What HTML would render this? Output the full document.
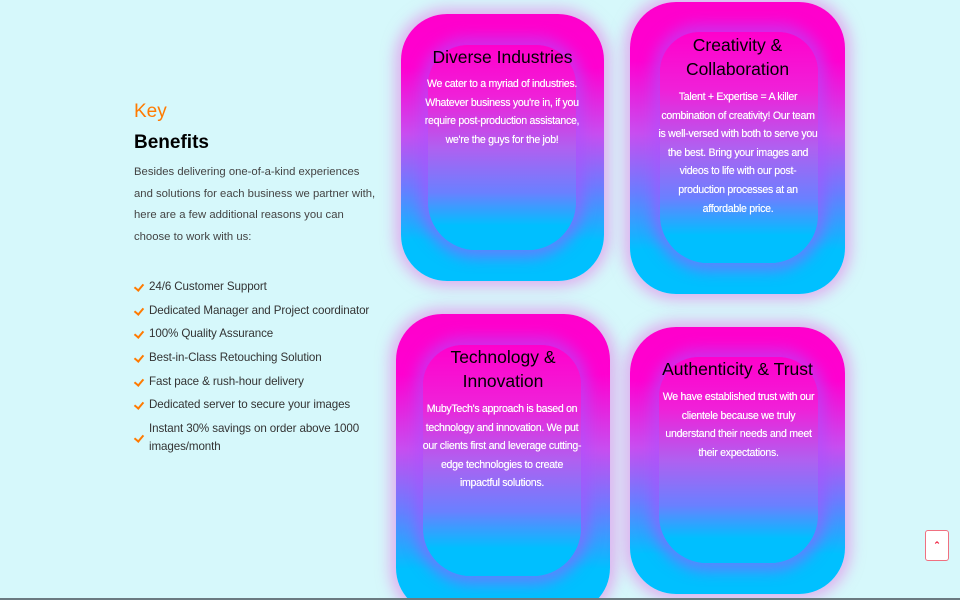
<!DOCTYPE html>
<html><head><meta charset="utf-8"><style>
*{margin:0;padding:0;box-sizing:border-box}
html,body{width:960px;height:600px;overflow:hidden}
body{background:#d6f8fb;font-family:"Liberation Sans",sans-serif;position:relative}
.left{position:absolute;left:134px;top:100px;width:250px}
.key{color:#ff7a00;font-size:19px;line-height:24px}
.ben{color:#000;font-size:19px;font-weight:bold;line-height:26px;margin-top:6px}
.desc{color:#444;font-size:11.3px;line-height:21.5px;margin-top:6px;width:246px}
ul{list-style:none;margin-top:30px}
li{position:relative;padding-left:15px;color:#333;font-size:11.6px;line-height:18px;margin-bottom:5.7px;letter-spacing:-.1px}
li:before{content:"";position:absolute;left:2px;top:4px;width:4px;height:7px;border:solid #ff7a00;border-width:0 2px 2px 0;transform:rotate(40deg)}
li.two:before{top:13px}
.card{position:absolute;border-radius:46px;background:linear-gradient(#ff00cc 0%,#ff00d0 20%,#c84ef0 45%,#6a7dff 65%,#00c0ff 85%,#00c0ff 100%);box-shadow:0 0 14px 6px rgba(230,120,230,.55)}
.in{position:absolute;border-radius:40px 40px 48px 48px;background:linear-gradient(#ff00cc 0%,#f020d8 25%,#b060f0 50%,#6a80ff 72%,#00bfff 88%);box-shadow:0 0 14px 8px rgba(170,80,255,.55)}
.t{position:absolute;text-align:center;color:#000;font-size:17.5px;line-height:24px}
.b{position:absolute;text-align:center;color:#fff;font-size:10.6px;line-height:18.6px;letter-spacing:-.3px;text-shadow:0 0 .4px #fff}
.up{position:absolute;left:925px;top:530px;width:24px;height:31px;border:1.5px solid #f07080;border-radius:3px;background:#fff;color:#f02040;font-size:9px;text-align:center;line-height:28px;font-weight:bold}
.line{position:absolute;left:0;top:598px;width:960px;height:2px;background:#6a7a80}
</style></head><body>
<div class="left">
<div class="key">Key</div>
<div class="ben">Benefits</div>
<div class="desc">Besides delivering one-of-a-kind experiences and solutions for each business we partner with, here are a few additional reasons you can choose to work with us:</div>
<ul>
<li>24/6 Customer Support</li>
<li>Dedicated Manager and Project coordinator</li>
<li>100% Quality Assurance</li>
<li>Best-in-Class Retouching Solution</li>
<li>Fast pace &amp; rush-hour delivery</li>
<li>Dedicated server to secure your images</li>
<li class="two">Instant 30% savings on order above 1000 images/month</li>
</ul>
</div>

<div class="card" style="left:401px;top:14px;width:203px;height:267px"></div>
<div class="in" style="left:428px;top:45px;width:148px;height:205px"></div>
<div class="t" style="left:401px;top:45px;width:203px">Diverse Industries</div>
<div class="b" style="left:424px;top:75px;width:156px">We cater to a myriad of industries.<br>Whatever business you're in, if you require post-production assistance, we're the guys for the job!</div>

<div class="card" style="left:630px;top:2px;width:215px;height:292px"></div>
<div class="in" style="left:660px;top:32px;width:158px;height:231px"></div>
<div class="t" style="left:630px;top:33px;width:215px">Creativity &amp;<br>Collaboration</div>
<div class="b" style="left:658px;top:88px;width:160px">Talent + Expertise = A killer combination of creativity! Our team is well-versed with both to serve you the best. Bring your images and videos to life with our post-production processes at an affordable price.</div>

<div class="card" style="left:396px;top:314px;width:214px;height:300px"></div>
<div class="in" style="left:423px;top:345px;width:158px;height:231px"></div>
<div class="t" style="left:396px;top:345px;width:214px">Technology &amp;<br>Innovation</div>
<div class="b" style="left:420px;top:400px;width:164px">MubyTech's approach is based on technology and innovation. We put our clients first and leverage cutting-edge technologies to create impactful solutions.</div>

<div class="card" style="left:630px;top:327px;width:215px;height:267px"></div>
<div class="in" style="left:659px;top:357px;width:159px;height:206px"></div>
<div class="t" style="left:630px;top:357px;width:215px">Authenticity &amp; Trust</div>
<div class="b" style="left:660px;top:388px;width:157px">We have established trust with our clientele because we truly understand their needs and meet their expectations.</div>

<div class="up">&#8963;</div>
<div class="line"></div>
</body></html>
